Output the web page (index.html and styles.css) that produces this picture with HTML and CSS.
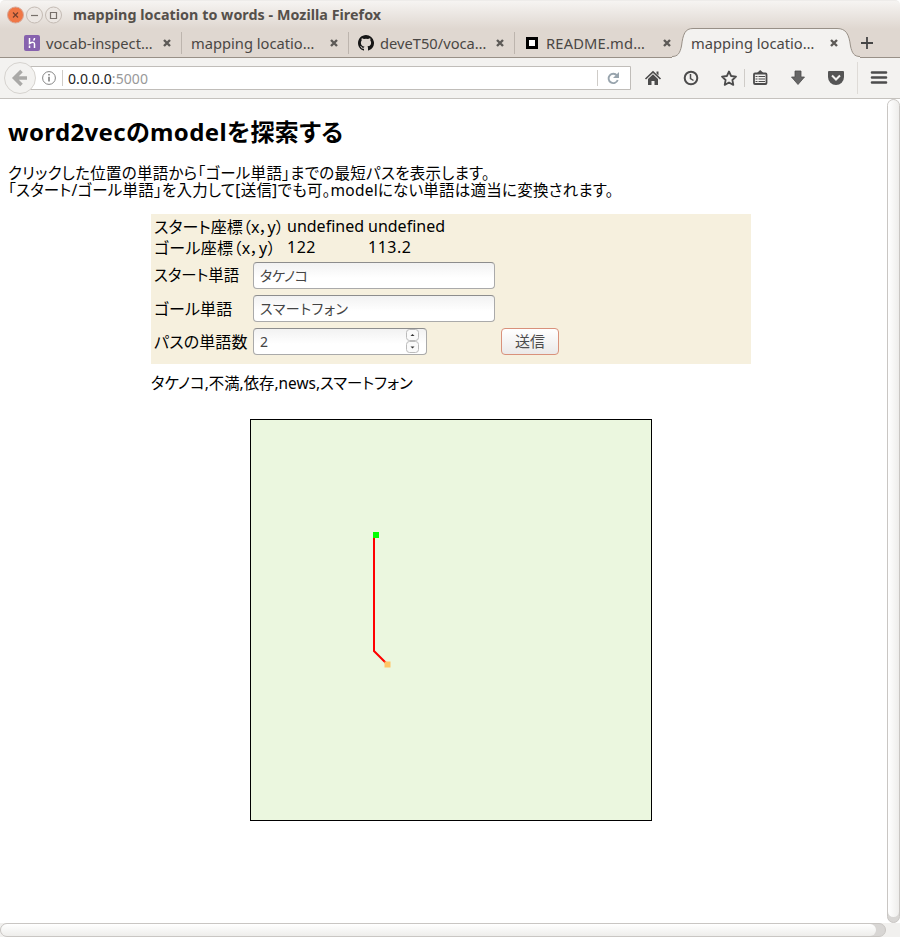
FILE: index.html
```html
<!DOCTYPE html>
<html lang="ja">
<head>
<meta charset="utf-8">
<title>mapping location to words</title>
<link rel="stylesheet" href="styles.css">
</head>
<body>
<div class="window">
  <header class="titlebar">
    <svg class="controls" width="58" height="20" viewBox="0 0 58 20">
      <circle cx="9.5" cy="10" r="8" fill="#f07746" stroke="#d8a99a"/>
      <path d="M7 7.5l5 5m0-5l-5 5" stroke="#743f2d" stroke-width="1.2"/>
      <circle cx="28.5" cy="10" r="8" fill="#ece7e3" stroke="#c4bbb4"/>
      <path d="M25 10.500h7" stroke="#77706b" stroke-width="1.2"/>
      <circle cx="47.500" cy="10" r="8" fill="#ece7e3" stroke="#c4bbb4"/>
      <path d="M44.500 7.500h6v6h-6z" fill="none" stroke="#77706b" stroke-width="1.2"/>
    </svg>
    <span class="t title">mapping location to words - Mozilla Firefox</span>
  </header>

  <nav class="tabs">
    <div class="tab tab-a">
      <svg width="16" height="16" viewBox="0 0 16 16"><rect width="16" height="16" rx="2" fill="#8762ae"/><path d="M5.500 3v5.500Q10.500 6 10.500 9v4M10.500 3q0 1.500-1 2.500M5.500 13v-2.500" fill="none" stroke="#fff" stroke-width="1.5"/></svg>
      <span class="t name">vocab-inspect…</span>
      <svg class="x" width="8" height="8" viewBox="0 0 8 8"><path d="M1 1l6 6M7 1l-6 6"/></svg>
    </div>
    <div class="tab tab-b">
      <span class="t name">mapping locatio…</span>
      <svg class="x" width="8" height="8" viewBox="0 0 8 8"><path d="M1 1l6 6M7 1l-6 6"/></svg>
    </div>
    <div class="tab tab-c">
      <svg width="16" height="16" viewBox="0 0 16 16"><path fill="#161616" d="M8 0C3.600 0 0 3.600 0 8c0 3.500 2.300 6.500 5.500 7.600.4.100.5-.2.5-.4v-1.500c-2.200.5-2.700-.9-2.700-.9-.4-.9-.9-1.200-.9-1.200-.7-.5.100-.5.100-.5.800.1 1.200.8 1.200.8.700 1.200 1.900.9 2.300.7.100-.5.300-.9.500-1.100-1.800-.2-3.600-.9-3.600-4 0-.9.300-1.600.8-2.100-.1-.2-.4-1 .1-2.100 0 0 .700-.2 2.200.8a7.500 7.500 0 0 1 4 0c1.500-1 2.200-.8 2.200-.8.4 1.100.200 1.900.1 2.100.5.600.8 1.300.8 2.100 0 3.100-1.900 3.700-3.700 3.900.3.300.600.8.600 1.500v2.300c0 .2.100.5.500.4A8 8 0 0 0 8 0z"/></svg>
      <span class="t name">deveT50/voca…</span>
      <svg class="x" width="8" height="8" viewBox="0 0 8 8"><path d="M1 1l6 6M7 1l-6 6"/></svg>
    </div>
    <div class="tab tab-d">
      <svg width="12" height="12" viewBox="0 0 12 12"><path d="M1.500 1.500h9v9h-9z" fill="#fff" stroke="#000" stroke-width="3"/></svg>
      <span class="t name readme">README.md…</span>
      <svg class="x" width="8" height="8" viewBox="0 0 8 8"><path d="M1 1l6 6M7 1l-6 6"/></svg>
    </div>
    <div class="tab tab-e">
      <svg class="shape" width="192" height="30" viewBox="0 0 192 30"><path d="M0 28.500C6 28.500 8 25 9.500 18C11 6 13 .5 21 .5H165C174 .5 177 6 178.500 18C180 25 182 28.500 188 28.500V30H0z" fill="#f3f2f0"/><path d="M0 28.500C6 28.500 8 25 9.500 18C11 6 13 .5 21 .5H165C174 .5 177 6 178.500 18C180 25 182 28.500 188 28.500" fill="none" stroke="#989087"/></svg>
      <span class="t name">mapping locatio…</span>
      <svg class="x" width="8" height="8" viewBox="0 0 8 8"><path d="M1 1l6 6M7 1l-6 6"/></svg>
    </div>
    <svg class="plus" width="12" height="12" viewBox="0 0 12 12"><path d="M6 0v12M0 6h12" stroke="#454545" stroke-width="1.800"/></svg>
  </nav>

  <div class="toolbar">
    <svg width="900" height="40" viewBox="0 58 900 40">
      <path d="M28 66.500H630.500V89.500H28z" fill="#fff" stroke="#c0bdb9"/>
      <circle cx="20" cy="78" r="15.500" fill="#f3f2f0" stroke="#d6d3cf"/>
      <path d="M27 78H16M21.500 71L14.500 78L21.500 85" fill="none" stroke="#aaa9a7" stroke-width="3.600"/>
      <circle cx="49" cy="78" r="6.400" fill="none" stroke="#858585"/><path d="M49 76.800v4.700M49 74v1.600" stroke="#777" stroke-width="1.500"/>
      <path d="M62.500 70v16M597.500 70v16M744.500 69v18" stroke="#cfccc8"/>
      <path d="M857.500 62v32" stroke="#dedbd7"/>
      <path d="M617 75.500A4.700 4.700 0 1 0 617.700 80" fill="none" stroke="#98a4ad" stroke-width="1.900"/><path d="M619 72v6h-6z" fill="#98a4ad"/>
      <path d="M645.500 79L653 71.800L660.500 79" fill="none" stroke="#4c4c4c" stroke-width="1.600"/><path d="M648 79l5-4.800 5 4.800v6h-3.500v-4h-3v4H648zM656.500 71.500h2v4l-2-2z" fill="#4c4c4c"/>
      <circle cx="691" cy="78" r="6.300" fill="none" stroke="#4c4c4c" stroke-width="2"/><path d="M690.500 74v4.500l3 2" fill="none" stroke="#4c4c4c" stroke-width="1.500"/>
      <path d="M729 71.500l2.100 4.500 4.900.6-3.600 3.400.9 4.900-4.300-2.400-4.300 2.400.9-4.900-3.600-3.400 4.900-.6z" fill="none" stroke="#4c4c4c" stroke-width="1.800" stroke-linejoin="round"/>
      <rect x="754" y="73.500" width="12.500" height="10.500" rx="1" fill="#f3f2f0" stroke="#4c4c4c" stroke-width="1.800"/><path d="M756.500 73.500l3.700-3.500 3.800 3.500z" fill="#4c4c4c"/><path d="M755.500 76.500h2M758.500 76.500h6.500M755.500 79h2M758.500 79h6.500M755.500 81.500h2M758.500 81.500h6.500" stroke="#4c4c4c" stroke-width="1.200"/>
      <path d="M795 71h6v6h3.500l-6.500 7.500-6.500-7.500h3.500z" fill="#666" stroke="#4c4c4c" stroke-width=".8"/>
      <path d="M829 71h14q1 0 1 1v5a8 8 0 0 1-16 0v-5q0-1 1-1z" fill="#555"/><path d="M832 75.500l4 4 4-4" fill="none" stroke="#f3f2f0" stroke-width="2"/>
      <path d="M872 72.500h14M872 77.500h14M872 82.500h14" stroke="#4c4c4c" stroke-width="2.600" stroke-linecap="round"/>
    </svg>
    <span class="t url"><b>0.0.0.0</b>:5000</span>
  </div>

  <div class="view">
    <main>
      <h1><span class="t h">word2vecのmodelを探索する</span></h1>
      <p class="intro"><span class="t p1">クリックした位置の単語から「ゴール単語」までの最短パスを表示します。</span><br><span class="t p2">「スタート/ゴール単語」を入力して[送信]でも可。modelにない単語は適当に変換されます。</span></p>
      <form class="panel">
        <div class="row coords"><span class="label wide"><span class="t c1">スタート座標（x，y）</span></span><span class="cell"><span class="t u">undefined</span></span><span class="t u">undefined</span></div>
        <div class="row coords"><span class="label wide"><span class="t c2">ゴール座標（x，y）</span></span><span class="cell"><span class="t num">122</span></span><span class="t num">113.2</span></div>
        <div class="row"><span class="label"><span class="t l1">スタート単語</span></span><span class="field"><span class="t f1">タケノコ</span></span></div>
        <div class="row"><span class="label"><span class="t l2">ゴール単語</span></span><span class="field"><span class="t f2">スマートフォン</span></span></div>
        <div class="row"><span class="label"><span class="t l3">パスの単語数</span></span><span class="field number">2<svg width="14" height="25" viewBox="0 0 14 25"><rect x=".5" y=".5" width="12" height="11" rx="3" fill="#fafafa" stroke="#bbb"/><rect x=".5" y="12.500" width="12" height="11" rx="3" fill="#fafafa" stroke="#bbb"/><path d="M4.500 7h4l-2-2zM4.500 17.500h4l-2 2z" fill="#333"/></svg></span><span class="submit"><span class="t s">送信</span></span></div>
      </form>
      <p class="path"><span class="t o">タケノコ,不満,依存,news,スマートフォン</span></p>
      <svg class="map" width="402" height="402" viewBox="250 419 402 402">
        <rect x="250.500" y="419.500" width="401" height="401" fill="#ebf7df" stroke="#000"/>
        <path d="M374 535V651L387 664" fill="none" stroke="#f00" stroke-width="2"/>
        <path d="M373 532h6v6h-6z" fill="#0f0"/>
        <path d="M384.500 661.500h6v6h-6z" fill="#ffc566"/>
      </svg>
    </main>
    <div class="vbar"><div class="thumb"></div></div>
  </div>
  <div class="hbar"><div class="track"><div class="thumb"></div></div></div>
</div>
</body>
</html>
```

FILE: styles.css
```css
* { box-sizing: border-box; }
body { margin: 0; background: #fff; font-family: "Noto Sans", "Noto Sans CJK JP", sans-serif; }
svg { display: block; flex: none; }
.t { white-space: nowrap; }
.window { display: flex; flex-direction: column; width: 900px; height: 937px; overflow: hidden; }
.titlebar { display: flex; align-items: center; height: 29px; padding-left: 6px; background: linear-gradient(#f6f4f2, #dfd7d0); border-top: 1px solid #eeecea; border-radius: 5px 5px 0 0; }
.title { margin: -2px 0 0 9px; font-size: 14.3px; font-weight: 700; color: #55504b; letter-spacing: .04px; }
.tabs { display: flex; align-items: center; height: 29px; background: #dfd7d0; border-bottom: 1px solid #989087; color: #4a4744; font-size: 14.7px; }
.tab { display: flex; align-items: center; position: relative; height: 22px; border-right: 1px solid #bdb5ae; }
.tab-a { width: 182px; padding-left: 24px; }
.tab-b { width: 167px; padding-left: 9px; }
.tab-c { width: 166px; padding-left: 9px; }
.tab-d { width: 161px; padding-left: 11px; border: 0; }
.tab-e { width: 185px; padding-left: 15px; border: 0; }
.tab svg + .name { margin-left: 6px; }
.tab-d svg + .name { margin-left: 8px; }
.tab-e svg + .name { position: relative; margin-left: 0; }
.readme { letter-spacing: .17px; }
.shape { position: absolute; left: -4px; top: -4px; }
.x { position: relative; margin-left: auto; margin-right: 10px; fill: none; stroke: #5d5a57; stroke-width: 2.4; }
.tab-d .x { margin-right: 5px; }
.tab-e .x { margin-right: 23px; }
.toolbar { position: relative; height: 41px; background: #f3f2f0; border-bottom: 1px solid #c5c2be; }
.url { position: absolute; left: 68px; top: 11px; font-size: 14px; line-height: 20px; color: #999; letter-spacing: .08px; }
.url b { font-weight: 400; color: #222; }
.view { display: flex; height: 824px; }
main { width: 887px; padding: 0 8px; color: #000; font-size: 16px; font-feature-settings: "palt"; }
h1 { margin: 17px 0 17px; font-size: 24px; line-height: 32px; font-weight: 700; }
.h { letter-spacing: .37px; }
.intro { margin: 0; font-size: 15.5px; line-height: 17px; }
.p1 { letter-spacing: .27px; }
.p2 { letter-spacing: .23px; }
.panel { width: 600px; height: 150px; margin: 15px 0 0 143px; padding: 1px 3px; background: #f6f0de; }
.row { display: flex; align-items: center; height: 33px; }
.coords { height: 21px; }
.coords + .row:not(.coords) { margin-top: 2px; }
.label { width: 99px; padding-bottom: 2px; }
.wide { width: 133px; padding-bottom: 0; }
.cell { width: 81px; }
.c1 { letter-spacing: .07px; }
.c2 { letter-spacing: .35px; }
.num { letter-spacing: .5px; }
.l1 { font-size: 15.400px; }
.l2, .l3 { letter-spacing: .12px; }
.field { display: flex; align-items: center; width: 242px; height: 27px; padding-left: 6px; border: 1px solid #aaa; border-top-color: #8d8d8d; border-radius: 4px; background: linear-gradient(#f2f2f2, #fff 60%); font-size: 14px; color: #444; }
.field .t { padding-bottom: 2px; }
.f1 { letter-spacing: -.25px; }
.f2 { letter-spacing: .6px; }
.number { justify-content: space-between; width: 174px; padding-right: 6px; }
.submit { display: flex; align-items: center; justify-content: center; width: 58px; height: 27px; margin-left: 74px; border: 1px solid #d9917b; border-radius: 4px; background: linear-gradient(#fff, #ebe9e8); color: #4c4c4c; font-size: 15px; }
.submit .t { padding-bottom: 2px; }
.path { margin: 10px 0 0 143px; font-size: 15.4px; line-height: 20px; }
.map { margin: 25px 0 0 242px; }
.vbar { width: 13px; border: 1px solid #c9c6c3; border-radius: 7px; background: #d8d6d4; }
.vbar .thumb { height: 817px; border-radius: 6px; background: linear-gradient(90deg, #fff, #eeedeb); }
.hbar { height: 14px; background: #f1f0ee; }
.track { width: 886px; height: 14px; border: 1px solid #c9c6c3; border-radius: 7px; background: #d8d6d4; }
.track .thumb { width: 875px; height: 12px; border-radius: 6px; background: linear-gradient(#fff, #eeedeb); }
```
